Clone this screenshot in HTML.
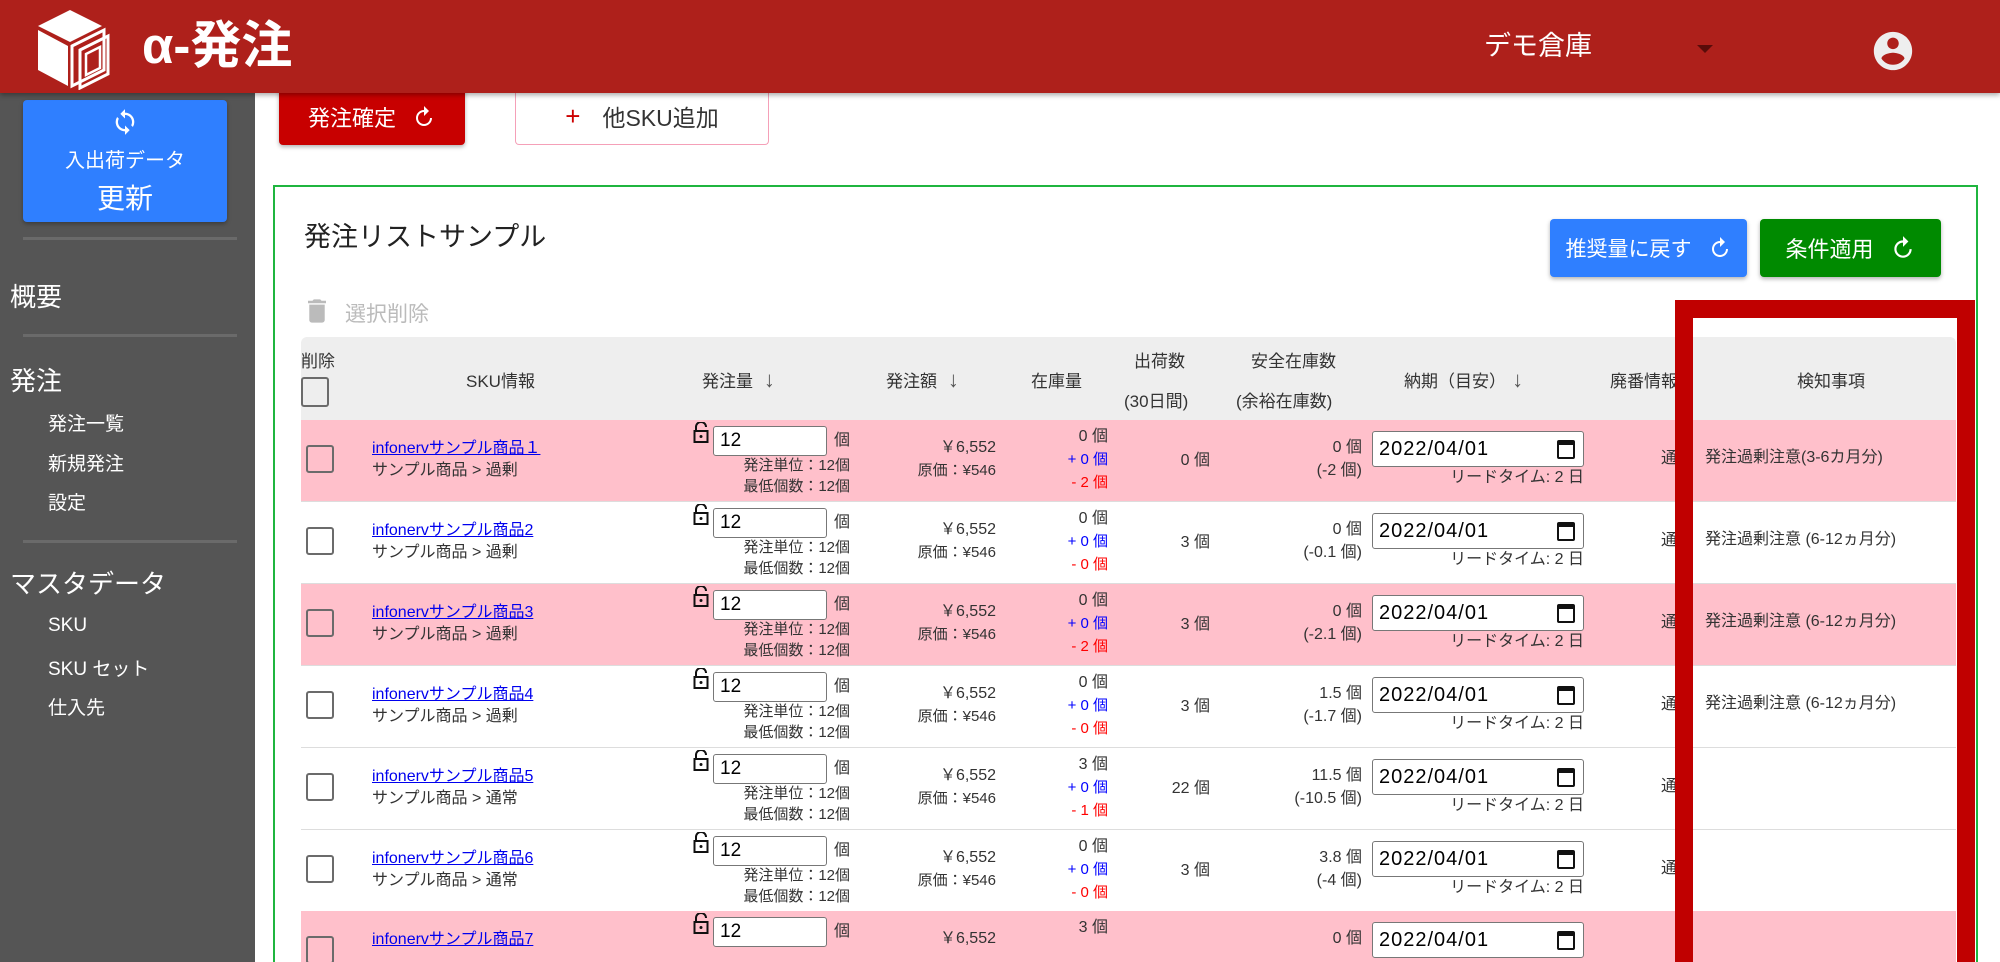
<!DOCTYPE html>
<html style="width:2000px;height:962px;overflow:hidden"><head><meta charset="utf-8"><style>
*{box-sizing:border-box;margin:0;padding:0}
body{width:2000px;height:962px;overflow:hidden;position:relative;background:#fff;font-family:"Liberation Sans","Noto Sans CJK JP",sans-serif;color:#333}
.a{position:absolute;white-space:nowrap}
#hdr{position:absolute;left:0;top:0;width:2000px;height:93px;background:#ae201b;box-shadow:0 2px 5px rgba(0,0,0,.35);z-index:5}
#side{position:absolute;left:0;top:93px;width:255px;height:869px;background:#555}
.hr{position:absolute;left:23px;width:214px;height:3px;background:#6a6a6a}
.s1{color:#fff;font-size:26px;left:10px}
.s2{color:#fff;font-size:19px;left:48px}
.btn{position:absolute;border-radius:4px;color:#fff;display:flex;align-items:center;justify-content:center;box-shadow:0 2px 4px rgba(0,0,0,.3)}
.btn svg{margin-left:16px}
.row{position:absolute;left:301px;width:1655px;height:82px;border-bottom:1px solid #ddd;overflow:hidden}
.pk{background:#ffc0cb}
.row .a{font-size:16px;line-height:22px}
.r{text-align:right}
.cb{position:absolute;left:5px;top:25px;width:28px;height:28px;border:2.5px solid #6b6b6b;border-radius:3px;background:transparent}
.inp{position:absolute;left:412px;top:6px;width:114px;height:30px;border:1px solid #777;border-radius:3px;background:#fff;font-size:19px;line-height:28px;padding-left:6px;color:#000}
.dt{position:absolute;left:1071px;top:11px;width:212px;height:36px;border:1px solid #777;border-radius:3px;background:#fff;font-size:20px;line-height:34px;padding-left:6px;color:#000;letter-spacing:1px}
.cal{position:absolute;right:8px;top:8px;width:18px;height:19px;border:2.5px solid #111;border-top-width:5px;border-radius:2px}
.lk{position:absolute;left:392px;top:2px}
.th{position:absolute;font-size:17px;color:#333;white-space:nowrap}
.blue{color:#00f}.red{color:#f00}
a{color:#00e;text-decoration:underline}
</style></head><body>
<div id="hdr">
 <svg class="a" style="left:34px;top:8px" width="80" height="82" viewBox="0 0 80 82">
  <polygon points="36,2 68,18 36,34 4,18" fill="#fff"/>
  <polygon points="4,22 34,38 34,78 4,62" fill="#fff"/>
  <polygon points="38,38 70,22 70,62 38,78" fill="none" stroke="#fff" stroke-width="3"/>
  <polygon points="46,42 74,28 74,66 46,80" fill="none" stroke="#fff" stroke-width="3"/>
  <polygon points="52,46 66,39 66,60 52,67" fill="none" stroke="#fff" stroke-width="2.5"/>
 </svg>
 <div class="a" style="left:142px;top:16px;font-size:51px;font-weight:bold;color:#fff;line-height:60px">α-発注</div>
 <div class="a" style="left:1484px;top:28px;font-size:27px;color:#fff;line-height:36px">デモ倉庫</div>
 <div class="a" style="left:1697px;top:45px;width:0;height:0;border-left:8px solid transparent;border-right:8px solid transparent;border-top:8px solid #5a0c0a"></div>
 <svg class="a" style="left:1870px;top:28px" width="46" height="46" viewBox="0 0 24 24"><path fill="#eee" d="M12 2C6.48 2 2 6.48 2 12s4.48 10 10 10 10-4.48 10-10S17.52 2 12 2zm0 3c1.66 0 3 1.34 3 3s-1.34 3-3 3-3-1.34-3-3 1.34-3 3-3zm0 14.2c-2.5 0-4.71-1.28-6-3.22.03-1.99 4-3.08 6-3.08 1.99 0 5.970 1.09 6 3.08-1.29 1.94-3.5 3.22-6 3.22z"/></svg>
</div>
<div id="side">
 <div class="btn" style="left:23px;top:7px;width:204px;height:122px;background:#2f7fff;flex-direction:column">
  <svg width="28" height="32" viewBox="0 0 24 24" style="margin:0"><path fill="#fff" d="M12 4V1L8 5l4 4V6c3.31 0 6 2.69 6 6 0 1.01-.25 1.970-.7 2.8l1.46 1.46A7.93 7.93 0 0 0 20 12c0-4.42-3.58-8-8-8zm0 14c-3.31 0-6-2.69-6-6 0-1.01.25-1.97.7-2.8L5.24 7.74A7.93 7.93 0 0 0 4 12c0 4.42 3.58 8 8 8v3l4-4-4-4v3z"/></svg>
  <div style="font-size:20px;margin-top:6px">入出荷データ</div>
  <div style="font-size:28px;margin-top:4px">更新</div>
 </div>
 <div class="hr" style="top:144px"></div>
 <div class="a s1" style="top:184px">概要</div>
 <div class="hr" style="top:241px"></div>
 <div class="a s1" style="top:268px">発注</div>
 <div class="a s2" style="top:316px">発注一覧</div>
 <div class="a s2" style="top:356px">新規発注</div>
 <div class="a s2" style="top:395px">設定</div>
 <div class="hr" style="top:447px"></div>
 <div class="a s1" style="top:471px">マスタデータ</div>
 <div class="a s2" style="top:522px">SKU</div>
 <div class="a s2" style="top:561px">SKU セット</div>
 <div class="a s2" style="top:600px">仕入先</div>
</div>
<div class="btn" style="left:279px;top:88px;width:186px;height:57px;background:#c80000;font-size:22px;border-radius:0 0 4px 4px;z-index:4">発注確定<svg width="24" height="24" viewBox="0 0 24 24"><path fill="#fff" d="M12 5V1L7 6l5 5V7c3.31 0 6 2.69 6 6s-2.69 6-6 6-6-2.69-6-6H4c0 4.42 3.58 8 8 8s8-3.58 8-8-3.58-8-8-8z" transform="scale(-1,1) translate(-24,0)"/></svg></div>
<div class="a" style="left:515px;top:88px;width:254px;height:57px;border:1px solid #f5a0b8;border-top:none;border-radius:0 0 4px 4px;font-size:23px;color:#333;display:flex;align-items:center;justify-content:center"><span style="color:#c00;margin-right:22px;font-size:26px">+</span>他SKU追加</div>

<div class="a" style="left:273px;top:185px;width:1705px;height:800px;border:2.5px solid #1fb53f"></div>
<div class="a" style="left:304px;top:215px;font-size:27px;color:#222">発注リストサンプル</div>
<div class="btn" style="left:1550px;top:219px;width:197px;height:58px;background:#2f7fff;font-size:21px">推奨量に戻す<svg width="24" height="24" viewBox="0 0 24 24"><path fill="#fff" d="M12 5V1L7 6l5 5V7c3.31 0 6 2.69 6 6s-2.69 6-6 6-6-2.69-6-6H4c0 4.42 3.58 8 8 8s8-3.58 8-8-3.58-8-8-8z" transform="scale(-1,1) translate(-24,0)"/></svg></div>
<div class="btn" style="left:1760px;top:219px;width:181px;height:58px;background:#008a00;font-size:22px">条件適用<svg width="26" height="26" viewBox="0 0 24 24"><path fill="#fff" d="M12 5V1L7 6l5 5V7c3.31 0 6 2.69 6 6s-2.69 6-6 6-6-2.69-6-6H4c0 4.42 3.58 8 8 8s8-3.58 8-8-3.58-8-8-8z" transform="scale(-1,1) translate(-24,0)"/></svg></div>
<svg class="a" style="left:308px;top:299px" width="18" height="24" viewBox="0 0 14 18"><path fill="#bbb" d="M1 16c0 1.1.9 2 2 2h8c1.1 0 2-.9 2-2V4H1v12zM14 1h-3.5l-1-1h-5l-1 1H0v2h14V1z"/></svg>
<div class="a" style="left:345px;top:298px;font-size:21px;color:#bbb">選択削除</div>

<div class="a" style="left:301px;top:337px;width:1655px;height:83px;background:#eee;border-radius:6px 6px 0 0"></div>
<div class="th" style="left:301px;top:347px">削除</div>
<div class="a" style="left:301px;top:377px;width:28px;height:30px;border:2.5px solid #6b6b6b;border-radius:3px"></div>
<div class="th" style="left:466px;top:367px">SKU情報</div>
<div class="th" style="left:702px;top:367px">発注量 <span style="font-size:22px;color:#555">&nbsp;↓</span></div>
<div class="th" style="left:886px;top:367px">発注額 <span style="font-size:22px;color:#555">&nbsp;↓</span></div>
<div class="th" style="left:1031px;top:367px">在庫量</div>
<div class="th" style="left:1134px;top:347px">出荷数</div>
<div class="th" style="left:1124px;top:387px">(30日間)</div>
<div class="th" style="left:1251px;top:347px">安全在庫数</div>
<div class="th" style="left:1236px;top:387px">(余裕在庫数)</div>
<div class="th" style="left:1404px;top:367px">納期（目安）<span style="font-size:22px;color:#555">&nbsp;↓</span></div>
<div class="th" style="left:1610px;top:367px">廃番情報</div>
<div class="th" style="left:1797px;top:367px">検知事項</div>

<!-- rows -->
<div class="row pk" style="top:420px">
 <div class="cb"></div>
 <div class="a" style="left:71px;top:18px"><a>infonervサンプル商品１</a></div>
 <div class="a" style="left:71px;top:40px">サンプル商品 &gt; 過剰</div>
 <svg class="lk" width="16" height="22" viewBox="0 0 16 22"><path d="M3 9V5a5 5 0 0 1 10 0" fill="none" stroke="#111" stroke-width="2"/><rect x="1.5" y="9" width="13" height="11" fill="none" stroke="#111" stroke-width="2"/><circle cx="8" cy="14.5" r="1.5" fill="#111"/></svg>
 <div class="inp">12</div>
 <div class="a" style="left:533px;top:10px">個</div>
 <div class="a r" style="right:1106px;top:35px;font-size:15px">発注単位：12個</div>
 <div class="a r" style="right:1106px;top:56px;font-size:15px">最低個数：12個</div>
 <div class="a r" style="right:960px;top:17px">￥6,552</div>
 <div class="a r" style="right:960px;top:40px;font-size:15px">原価：¥546</div>
 <div class="a r" style="right:848px;top:6px">0 個</div>
 <div class="a r blue" style="right:848px;top:29px;font-size:15px">+ 0 個</div>
 <div class="a r red" style="right:848px;top:52px;font-size:15px">- 2 個</div>
 <div class="a r" style="right:746px;top:30px">0 個</div>
 <div class="a r" style="right:594px;top:17px">0 個</div>
 <div class="a r" style="right:594px;top:40px">(-2 個)</div>
 <div class="dt">2022/04/01<div class="cal"></div></div>
 <div class="a r" style="right:372px;top:47px">リードタイム: 2 日</div>
 <div class="a" style="left:1360px;top:28px">通常</div>
 <div class="a" style="left:1404px;top:27px">発注過剰注意(3-6カ月分)</div>
</div>
<div class="row" style="top:502px">
 <div class="cb"></div>
 <div class="a" style="left:71px;top:18px"><a>infonervサンプル商品2</a></div>
 <div class="a" style="left:71px;top:40px">サンプル商品 &gt; 過剰</div>
 <svg class="lk" width="16" height="22" viewBox="0 0 16 22"><path d="M3 9V5a5 5 0 0 1 10 0" fill="none" stroke="#111" stroke-width="2"/><rect x="1.5" y="9" width="13" height="11" fill="none" stroke="#111" stroke-width="2"/><circle cx="8" cy="14.5" r="1.5" fill="#111"/></svg>
 <div class="inp">12</div>
 <div class="a" style="left:533px;top:10px">個</div>
 <div class="a r" style="right:1106px;top:35px;font-size:15px">発注単位：12個</div>
 <div class="a r" style="right:1106px;top:56px;font-size:15px">最低個数：12個</div>
 <div class="a r" style="right:960px;top:17px">￥6,552</div>
 <div class="a r" style="right:960px;top:40px;font-size:15px">原価：¥546</div>
 <div class="a r" style="right:848px;top:6px">0 個</div>
 <div class="a r blue" style="right:848px;top:29px;font-size:15px">+ 0 個</div>
 <div class="a r red" style="right:848px;top:52px;font-size:15px">- 0 個</div>
 <div class="a r" style="right:746px;top:30px">3 個</div>
 <div class="a r" style="right:594px;top:17px">0 個</div>
 <div class="a r" style="right:594px;top:40px">(-0.1 個)</div>
 <div class="dt">2022/04/01<div class="cal"></div></div>
 <div class="a r" style="right:372px;top:47px">リードタイム: 2 日</div>
 <div class="a" style="left:1360px;top:28px">通常</div>
 <div class="a" style="left:1404px;top:27px">発注過剰注意 (6-12ヵ月分)</div>
</div>
<div class="row pk" style="top:584px">
 <div class="cb"></div>
 <div class="a" style="left:71px;top:18px"><a>infonervサンプル商品3</a></div>
 <div class="a" style="left:71px;top:40px">サンプル商品 &gt; 過剰</div>
 <svg class="lk" width="16" height="22" viewBox="0 0 16 22"><path d="M3 9V5a5 5 0 0 1 10 0" fill="none" stroke="#111" stroke-width="2"/><rect x="1.5" y="9" width="13" height="11" fill="none" stroke="#111" stroke-width="2"/><circle cx="8" cy="14.5" r="1.5" fill="#111"/></svg>
 <div class="inp">12</div>
 <div class="a" style="left:533px;top:10px">個</div>
 <div class="a r" style="right:1106px;top:35px;font-size:15px">発注単位：12個</div>
 <div class="a r" style="right:1106px;top:56px;font-size:15px">最低個数：12個</div>
 <div class="a r" style="right:960px;top:17px">￥6,552</div>
 <div class="a r" style="right:960px;top:40px;font-size:15px">原価：¥546</div>
 <div class="a r" style="right:848px;top:6px">0 個</div>
 <div class="a r blue" style="right:848px;top:29px;font-size:15px">+ 0 個</div>
 <div class="a r red" style="right:848px;top:52px;font-size:15px">- 2 個</div>
 <div class="a r" style="right:746px;top:30px">3 個</div>
 <div class="a r" style="right:594px;top:17px">0 個</div>
 <div class="a r" style="right:594px;top:40px">(-2.1 個)</div>
 <div class="dt">2022/04/01<div class="cal"></div></div>
 <div class="a r" style="right:372px;top:47px">リードタイム: 2 日</div>
 <div class="a" style="left:1360px;top:28px">通常</div>
 <div class="a" style="left:1404px;top:27px">発注過剰注意 (6-12ヵ月分)</div>
</div>
<div class="row" style="top:666px">
 <div class="cb"></div>
 <div class="a" style="left:71px;top:18px"><a>infonervサンプル商品4</a></div>
 <div class="a" style="left:71px;top:40px">サンプル商品 &gt; 過剰</div>
 <svg class="lk" width="16" height="22" viewBox="0 0 16 22"><path d="M3 9V5a5 5 0 0 1 10 0" fill="none" stroke="#111" stroke-width="2"/><rect x="1.5" y="9" width="13" height="11" fill="none" stroke="#111" stroke-width="2"/><circle cx="8" cy="14.5" r="1.5" fill="#111"/></svg>
 <div class="inp">12</div>
 <div class="a" style="left:533px;top:10px">個</div>
 <div class="a r" style="right:1106px;top:35px;font-size:15px">発注単位：12個</div>
 <div class="a r" style="right:1106px;top:56px;font-size:15px">最低個数：12個</div>
 <div class="a r" style="right:960px;top:17px">￥6,552</div>
 <div class="a r" style="right:960px;top:40px;font-size:15px">原価：¥546</div>
 <div class="a r" style="right:848px;top:6px">0 個</div>
 <div class="a r blue" style="right:848px;top:29px;font-size:15px">+ 0 個</div>
 <div class="a r red" style="right:848px;top:52px;font-size:15px">- 0 個</div>
 <div class="a r" style="right:746px;top:30px">3 個</div>
 <div class="a r" style="right:594px;top:17px">1.5 個</div>
 <div class="a r" style="right:594px;top:40px">(-1.7 個)</div>
 <div class="dt">2022/04/01<div class="cal"></div></div>
 <div class="a r" style="right:372px;top:47px">リードタイム: 2 日</div>
 <div class="a" style="left:1360px;top:28px">通常</div>
 <div class="a" style="left:1404px;top:27px">発注過剰注意 (6-12ヵ月分)</div>
</div>
<div class="row" style="top:748px">
 <div class="cb"></div>
 <div class="a" style="left:71px;top:18px"><a>infonervサンプル商品5</a></div>
 <div class="a" style="left:71px;top:40px">サンプル商品 &gt; 通常</div>
 <svg class="lk" width="16" height="22" viewBox="0 0 16 22"><path d="M3 9V5a5 5 0 0 1 10 0" fill="none" stroke="#111" stroke-width="2"/><rect x="1.5" y="9" width="13" height="11" fill="none" stroke="#111" stroke-width="2"/><circle cx="8" cy="14.5" r="1.5" fill="#111"/></svg>
 <div class="inp">12</div>
 <div class="a" style="left:533px;top:10px">個</div>
 <div class="a r" style="right:1106px;top:35px;font-size:15px">発注単位：12個</div>
 <div class="a r" style="right:1106px;top:56px;font-size:15px">最低個数：12個</div>
 <div class="a r" style="right:960px;top:17px">￥6,552</div>
 <div class="a r" style="right:960px;top:40px;font-size:15px">原価：¥546</div>
 <div class="a r" style="right:848px;top:6px">3 個</div>
 <div class="a r blue" style="right:848px;top:29px;font-size:15px">+ 0 個</div>
 <div class="a r red" style="right:848px;top:52px;font-size:15px">- 1 個</div>
 <div class="a r" style="right:746px;top:30px">22 個</div>
 <div class="a r" style="right:594px;top:17px">11.5 個</div>
 <div class="a r" style="right:594px;top:40px">(-10.5 個)</div>
 <div class="dt">2022/04/01<div class="cal"></div></div>
 <div class="a r" style="right:372px;top:47px">リードタイム: 2 日</div>
 <div class="a" style="left:1360px;top:28px">通常</div>
</div>
<div class="row" style="top:830px">
 <div class="cb"></div>
 <div class="a" style="left:71px;top:18px"><a>infonervサンプル商品6</a></div>
 <div class="a" style="left:71px;top:40px">サンプル商品 &gt; 通常</div>
 <svg class="lk" width="16" height="22" viewBox="0 0 16 22"><path d="M3 9V5a5 5 0 0 1 10 0" fill="none" stroke="#111" stroke-width="2"/><rect x="1.5" y="9" width="13" height="11" fill="none" stroke="#111" stroke-width="2"/><circle cx="8" cy="14.5" r="1.5" fill="#111"/></svg>
 <div class="inp">12</div>
 <div class="a" style="left:533px;top:10px">個</div>
 <div class="a r" style="right:1106px;top:35px;font-size:15px">発注単位：12個</div>
 <div class="a r" style="right:1106px;top:56px;font-size:15px">最低個数：12個</div>
 <div class="a r" style="right:960px;top:17px">￥6,552</div>
 <div class="a r" style="right:960px;top:40px;font-size:15px">原価：¥546</div>
 <div class="a r" style="right:848px;top:6px">0 個</div>
 <div class="a r blue" style="right:848px;top:29px;font-size:15px">+ 0 個</div>
 <div class="a r red" style="right:848px;top:52px;font-size:15px">- 0 個</div>
 <div class="a r" style="right:746px;top:30px">3 個</div>
 <div class="a r" style="right:594px;top:17px">3.8 個</div>
 <div class="a r" style="right:594px;top:40px">(-4 個)</div>
 <div class="dt">2022/04/01<div class="cal"></div></div>
 <div class="a r" style="right:372px;top:47px">リードタイム: 2 日</div>
 <div class="a" style="left:1360px;top:28px">通常</div>
</div>
<div class="row pk" style="top:911px;height:51px;border-bottom:none">
 <div class="cb"></div>
 <div class="a" style="left:71px;top:18px"><a>infonervサンプル商品7</a></div>
 <svg class="lk" width="16" height="22" viewBox="0 0 16 22"><path d="M3 9V5a5 5 0 0 1 10 0" fill="none" stroke="#111" stroke-width="2"/><rect x="1.5" y="9" width="13" height="11" fill="none" stroke="#111" stroke-width="2"/><circle cx="8" cy="14.5" r="1.5" fill="#111"/></svg>
 <div class="inp">12</div>
 <div class="a" style="left:533px;top:10px">個</div>
 <div class="a r" style="right:960px;top:17px">￥6,552</div>
 <div class="a r" style="right:848px;top:6px">3 個</div>
 <div class="a r" style="right:594px;top:17px">0 個</div>
 <div class="dt">2022/04/01<div class="cal"></div></div>
</div>

<!-- red highlight frame -->
<div class="a" style="left:1675px;top:300px;width:300px;height:662px;border:18px solid #c00000;border-bottom:none"></div>
</body></html>
